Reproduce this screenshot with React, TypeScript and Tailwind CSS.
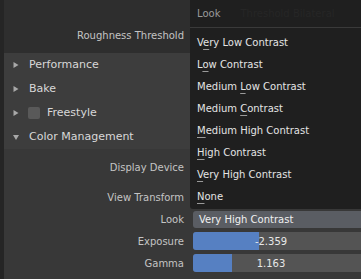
import React from "react";

const font = { fontFamily: '"DejaVu Sans", "Liberation Sans", sans-serif' };

type Item = { pre: string; key: string; post: string };

const lookItems: Item[] = [
  { pre: "V", key: "e", post: "ry Low Contrast" },
  { pre: "L", key: "o", post: "w Contrast" },
  { pre: "Medium ", key: "L", post: "ow Contrast" },
  { pre: "Medium ", key: "C", post: "ontrast" },
  { pre: "", key: "M", post: "edium High Contrast" },
  { pre: "", key: "H", post: "igh Contrast" },
  { pre: "", key: "V", post: "ery High Contrast" },
  { pre: "", key: "N", post: "one" },
];

function Arrow({ open }: { open?: boolean }) {
  return (
    <svg width="6" height="6" viewBox="0 0 6 6" className="shrink-0">
      {open ? (
        <path d="M0 1 L6 1 L3 6 Z" fill="#a8a8a8" />
      ) : (
        <path d="M0.5 0 L5.5 3 L0.5 6 Z" fill="#a8a8a8" />
      )}
    </svg>
  );
}

function Header({
  label,
  open,
  check,
}: {
  label: string;
  open?: boolean;
  check?: boolean;
}) {
  return (
    <div className="flex h-[24px] items-center bg-[#3d3d3d] pl-[9px] text-[11px] text-[#d8d8d8]">
      <Arrow open={open} />
      {check && (
        <div className="ml-[9px] h-[12px] w-[12px] rounded-[2px] bg-[#595959]" />
      )}
      <span className={check ? "ml-[7px]" : "ml-[10px]"}>{label}</span>
    </div>
  );
}

function Row({
  label,
  children,
  className = "",
}: {
  label: string;
  children?: React.ReactNode;
  className?: string;
}) {
  return (
    <div className={`flex h-[22px] items-center ${className}`}>
      <div className="w-[180px] shrink-0 text-right text-[10px] text-[#c4c4c4]">
        {label}
      </div>
      <div className="ml-[9px] flex-1">{children}</div>
    </div>
  );
}

function Slider({ value, fill }: { value: string; fill: number }) {
  return (
    <div className="relative h-[18px] overflow-hidden rounded-l-[3px] bg-[#545454]">
      <div
        className="absolute left-0 top-0 h-full bg-[#5680c2]"
        style={{ width: fill }}
      />
      <div className="relative flex h-full items-center justify-center pr-[12px] text-[10px] text-[#e8e8e8]">
        {value}
      </div>
    </div>
  );
}

export default function App() {
  return (
    <div
      className="relative flex h-[279px] w-[361px] overflow-hidden bg-[#383838]"
      style={font}
    >
      <div className="w-[4px] shrink-0 bg-[#252525]" />

      <div className="flex flex-1 flex-col">
        {/* top region */}
        <div className="h-[53px] bg-[#2e2e2e] pt-[24px]">
          <Row label="Roughness Threshold" />
        </div>

        <Header label="Performance" />
        <Header label="Bake" />
        <Header label="Freestyle" check />
        <Header label="Color Management" open />

        {/* color management body */}
        <div className="flex flex-col pt-[7px]">
          <Row label="Display Device" />
          <Row label="View Transform" className="mt-[8px]" />
          <Row label="Look">
            <div className="flex h-[17px] items-center rounded-l-[3px] bg-[#5a5d63] pl-[6px] text-[10px] text-[#f0f0f0]">
              Very High Contrast
            </div>
          </Row>
          <Row label="Exposure">
            <Slider value="-2.359" fill={66} />
          </Row>
          <Row label="Gamma">
            <Slider value="1.163" fill={39} />
          </Row>
        </div>
      </div>

      {/* popup menu */}
      <div className="absolute left-[190px] top-0 flex h-[209px] w-[171px] flex-col rounded-bl-[3px] bg-[#1f1f1f] text-[10px]">
        <div className="flex h-[27px] items-center pl-[7px]">
          <span className="text-[#9a9a9a]">Look</span>
          <span className="ml-[20px] text-[#262626]">Threshold Bilateral</span>
        </div>
        <div className="h-px bg-[#3a3a3a]" />
        <div className="flex flex-col pt-[3px]">
          {lookItems.map((it) => (
            <div
              key={it.pre + it.key + it.post}
              className="flex h-[22px] items-center pl-[7px] text-[#e4e4e4]"
            >
              <span className="whitespace-pre">
                {it.pre}
                <span className="underline decoration-[#9a9a9a] underline-offset-[3px]">
                  {it.key}
                </span>
                {it.post}
              </span>
            </div>
          ))}
        </div>
      </div>
    </div>
  );
}
